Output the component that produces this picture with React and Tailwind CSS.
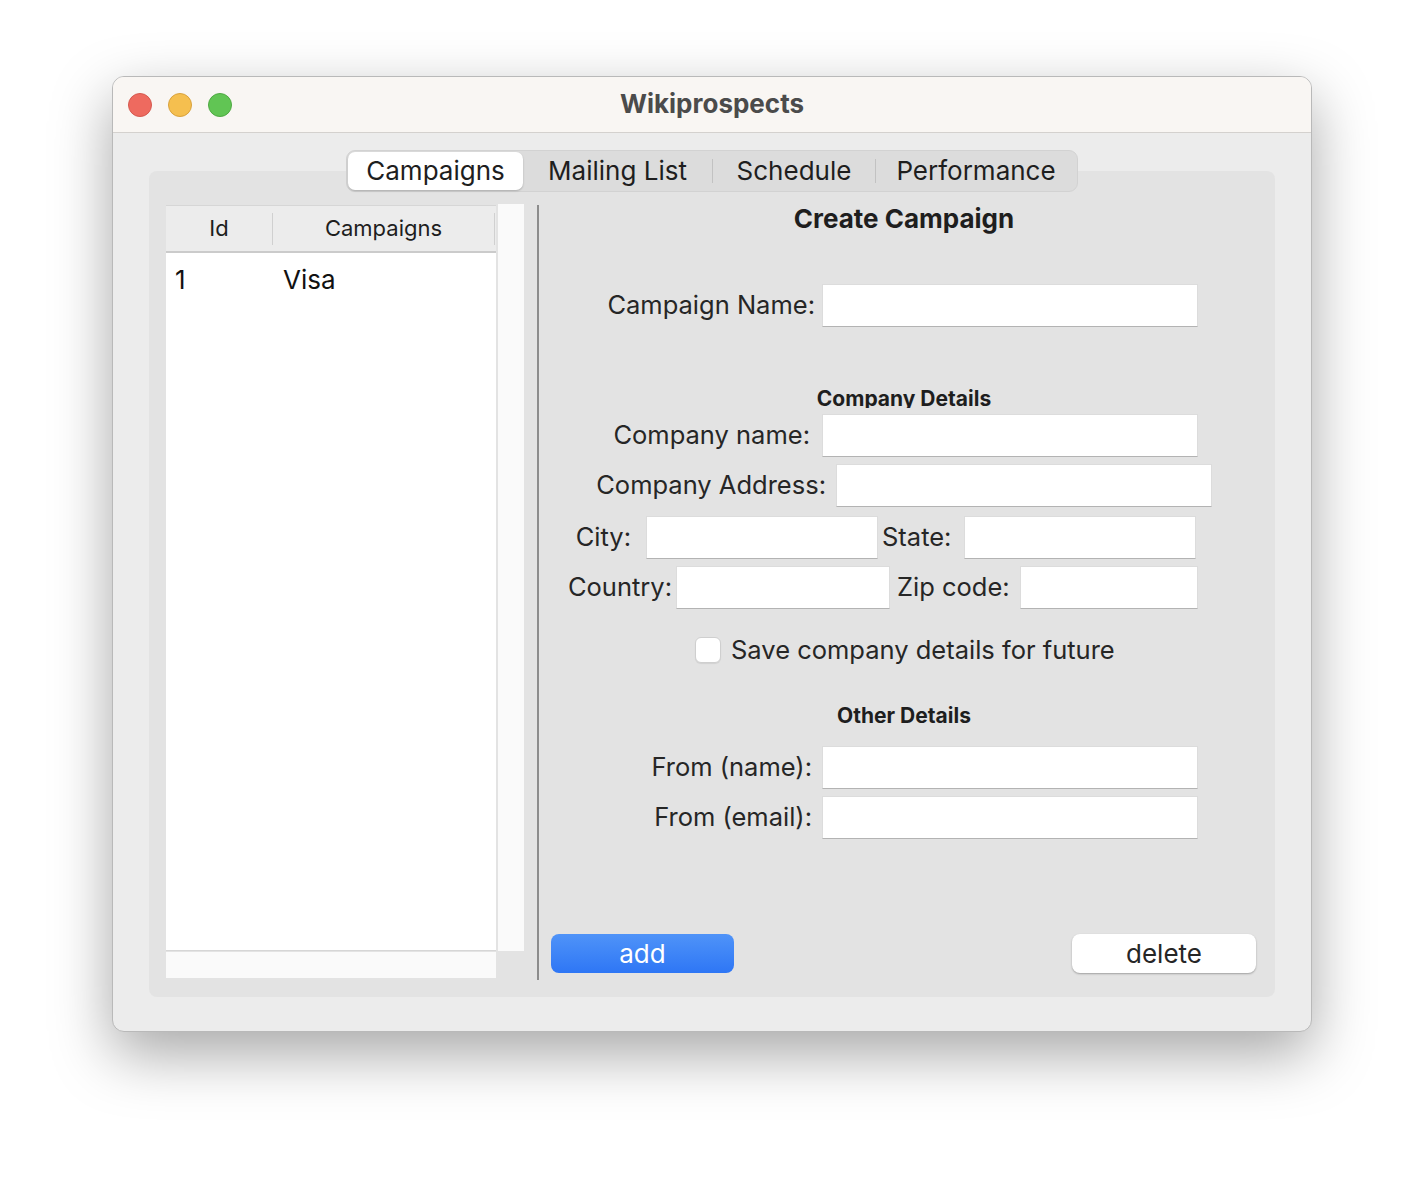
import { useState } from "react";

const Field = ({ className }) => (
  <div
    className={`h-[43px] bg-white border border-[#dcdcdc] border-b-[#b3b3b3] ${className}`}
  />
);

const TrafficLights = () => (
  <div className="flex items-center gap-[16px] pl-[15px]">
    <span className="w-[24px] h-[24px] rounded-full bg-[#ee6a5f] border border-[#d5594f]" />
    <span className="w-[24px] h-[24px] rounded-full bg-[#f5bf4f] border border-[#d9a23d]" />
    <span className="w-[24px] h-[24px] rounded-full bg-[#61c554] border border-[#4fa943]" />
  </div>
);

const Tabs = () => {
  const [active, setActive] = useState("Campaigns");
  const tabs = [
    { name: "Campaigns", w: "w-[175px]" },
    { name: "Mailing List", w: "w-[189px]" },
    { name: "Schedule", w: "w-[162px]" },
    { name: "Performance", w: "w-[200px]" },
  ];

  return (
    <div className="relative z-10 flex justify-center">
      <div className="flex items-center h-[42px] p-[1px] rounded-[9px] bg-[#dcdcdc] border border-[#d2d2d2]">
        {tabs.map((t, i) => (
          <div key={t.name} className="flex items-center h-full">
            {i > 1 && active !== tabs[i - 1].name && active !== t.name ? (
              <span className="w-px h-[24px] bg-[#c2c2c2]" />
            ) : null}
            <button
              onClick={() => setActive(t.name)}
              className={`${t.w} h-full text-[26px] leading-none text-[#1e1e1e] rounded-[7px] ${
                active === t.name
                  ? "bg-white shadow-[0_1px_2px_rgba(0,0,0,0.22)]"
                  : ""
              }`}
            >
              {t.name}
            </button>
          </div>
        ))}
      </div>
    </div>
  );
};

const CampaignTable = () => (
  <div className="pt-[33px] pl-[17px] flex flex-col">
    <div className="flex gap-[2px] h-[747px]">
      <div className="w-[330px] flex flex-col bg-white border-t border-b border-[#d6d6d6] mt-[1px]">
        <div className="h-[47px] bg-[#ececec] border-b-2 border-[#cbcbcb] flex items-center text-[22px] text-[#1e1e1e]">
          <div className="w-[106px] text-center">Id</div>
          <span className="w-px h-[32px] bg-[#d0d0d0]" />
          <div className="w-[221px] text-center">Campaigns</div>
          <span className="w-px h-[32px] bg-[#d0d0d0]" />
        </div>
        <div className="h-[52px] flex items-center text-[26px] text-[#111]">
          <span className="w-[117px] pl-[9px]">1</span>
          <span>Visa</span>
        </div>
      </div>
      <div className="w-[26px] bg-[#fafafa]" />
    </div>
    <div className="mt-[1px] w-[330px] h-[26px] bg-[#fafafa]" />
  </div>
);

const CreateCampaign = () => {
  const [save, setSave] = useState(false);

  return (
    <div className="w-[730px] flex flex-col pt-[33px] text-[25.5px] text-[#262626]">
      <div className="h-[30px] leading-[30px] text-center text-[26px] font-bold text-[#1e1e1e]">
        Create Campaign
      </div>

      <div className="mt-[50px] flex items-center">
        <span className="w-[276px] text-right">Campaign Name:</span>
        <Field className="ml-[7px] w-[376px]" />
      </div>

      <div className="mt-[60px] h-[21px] overflow-hidden text-center text-[21px] leading-[24px] font-bold text-[#1e1e1e]">
        Company Details
      </div>

      <div className="mt-[6px] flex items-center">
        <span className="w-[271px] text-right">Company name:</span>
        <Field className="ml-[12px] w-[376px]" />
      </div>

      <div className="mt-[7px] flex items-center">
        <span className="w-[287px] text-right">Company Address:</span>
        <Field className="ml-[10px] w-[376px]" />
      </div>

      <div className="mt-[9px] flex items-center">
        <span className="w-[92px] text-right">City:</span>
        <Field className="ml-[15px] w-[232px]" />
        <span className="w-[86px] pl-[4px]">State:</span>
        <Field className="w-[232px]" />
      </div>

      <div className="mt-[7px] flex items-center">
        <span className="w-[133px] text-right">Country:</span>
        <Field className="ml-[4px] w-[214px]" />
        <span className="w-[130px] pl-[7px]">Zip code:</span>
        <Field className="w-[178px]" />
      </div>

      <label className="mt-[28px] h-[26px] flex items-center pl-[156px] cursor-pointer">
        <input
          type="checkbox"
          checked={save}
          onChange={() => setSave(!save)}
          className="appearance-none w-[26px] h-[26px] rounded-[6px] bg-white border border-[#cfcfcf] shadow-[0_1px_1px_rgba(0,0,0,0.08)] checked:bg-[#3b82f6]"
        />
        <span className="ml-[10px]">Save company details for future</span>
      </label>

      <div className="mt-[41px] h-[24px] leading-[24px] text-center text-[21px] font-bold text-[#1e1e1e]">
        Other Details
      </div>

      <div className="mt-[18px] flex items-center">
        <span className="w-[273px] text-right">From (name):</span>
        <Field className="ml-[10px] w-[376px]" />
      </div>

      <div className="mt-[7px] flex items-center">
        <span className="w-[273px] text-right">From (email):</span>
        <Field className="ml-[10px] w-[376px]" />
      </div>

      <div className="mt-[95px] flex justify-between pl-[12px] pr-[13px]">
        <button className="w-[183px] h-[39px] rounded-[8px] bg-linear-to-b from-[#4f93f8] to-[#2e76f5] text-white text-[26px] leading-none">
          add
        </button>
        <button className="w-[184px] h-[39px] rounded-[8px] bg-white text-[#262626] text-[26px] leading-none shadow-[0_1px_2px_rgba(0,0,0,0.3)]">
          delete
        </button>
      </div>
    </div>
  );
};

const App = () => {
  return (
    <div className="min-h-screen bg-white flex justify-center pt-[76px] font-['Inter',sans-serif]">
      <div className="w-[1200px] h-[956px] rounded-[12px] overflow-hidden bg-[#ececec] border border-[#b9b9b9] shadow-[0_22px_60px_rgba(0,0,0,0.35)]">
        <div className="h-[56px] bg-[#f9f6f3] border-b border-[#d4d1ce] grid grid-cols-[1fr_auto_1fr] items-center">
          <TrafficLights />
          <div className="pb-[3px] text-[26px] font-bold text-[#4b4b4b]">Wikiprospects</div>
          <div />
        </div>

        <div className="px-[36px] pt-[17px]">
          <Tabs />
          <div className="-mt-[21px] h-[826px] rounded-[8px] bg-[#e3e3e3] flex">
            <CampaignTable />
            <div className="ml-[13px] mt-[34px] w-[2px] h-[775px] bg-[#8c8c8c]" />
            <CreateCampaign />
          </div>
        </div>
      </div>
    </div>
  );
};

export default App;
